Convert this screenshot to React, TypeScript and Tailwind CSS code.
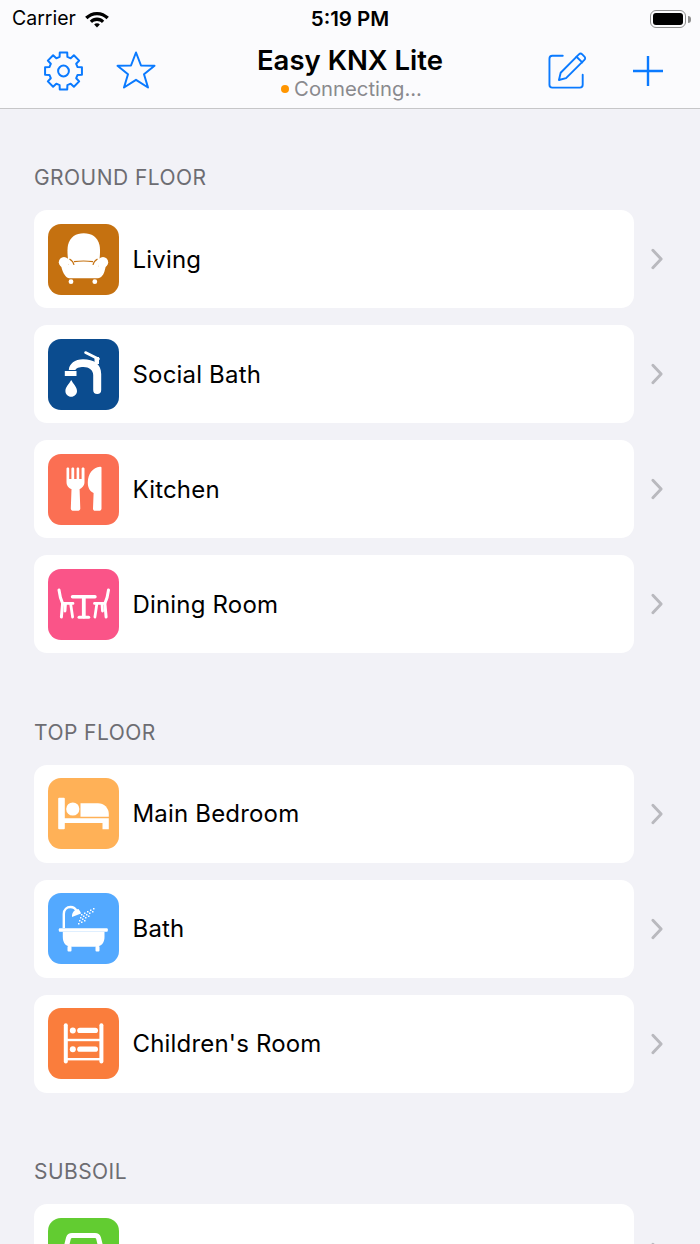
// App.tsx
const font = { fontFamily: 'Inter, "Noto Sans", sans-serif' };

// 8 tooth gear outline, centred on 20,20
function gearPath() {
  const pts: string[] = [];
  for (let i = 0; i < 8; i++) {
    const a = (i * Math.PI) / 4 - Math.PI / 2;
    const at = (r: number, d: number) =>
      `${(20 + r * Math.cos(a + d)).toFixed(2)} ${(20 + r * Math.sin(a + d)).toFixed(2)}`;
    pts.push(at(14.6, -0.27), at(18.8, -0.2), at(18.8, 0.2), at(14.6, 0.27));
  }
  return `M${pts.join(' L')} Z`;
}

function Armchair() {
  return (
    <svg viewBox="0 0 71 71" className="h-full w-full" fill="white">
      <path d="M21 44 C19.5 32 19 26 20 21 C22 13 28 9.3 35.7 9.3 C43.5 9.3 49.5 13 51.5 21 C52.5 26 52 32 50.5 44 Z" />
      <circle cx="16" cy="38.3" r="5.2" />
      <circle cx="55" cy="38.3" r="5.2" />
      <path d="M13 41 H21 V43 H50.5 V41 H58 C57 46 56 50 54 52 C53 53.8 51 54.3 48 54.3 H23 C20 54.3 18.5 53.8 17.5 52 C15 49 14 46 13 41 Z" />
      <circle cx="23" cy="57.7" r="2.4" />
      <circle cx="46.8" cy="57.7" r="2.4" />
      <path d="M21.5 35 C24 36.5 25.5 38 26 41 M49.5 35 C47 36.5 45.5 38 45 41 M26 37.6 C32 36.8 39 36.8 45 37.6" stroke="#c57110" strokeWidth="1.1" fill="none" />
    </svg>
  );
}

function Faucet() {
  return (
    <svg viewBox="0 0 71 71" className="h-full w-full" fill="white">
      <path d="M20.8 31 C21 25 27 20.3 35 20.3 C46 20.3 53.2 25 53.2 35 V51 A4 4 0 0 1 45.2 51 V36 C45.2 31 41 28 35.5 28 C31 28 28 29 27.5 31 Z" />
      <path d="M37.5 13.5 L50.5 20" fill="none" stroke="white" strokeWidth="2.6" strokeLinecap="round" />
      <rect x="46.5" y="18" width="4.5" height="7" />
      <rect x="16.8" y="32" width="11.7" height="5" />
      <path d="M23.2 41 C25 44.5 29 48 29 52 C29 55.2 26.4 57.8 23.2 57.8 C20 57.8 17.4 55.2 17.4 52 C17.4 48 21.4 44.5 23.2 41 Z" />
    </svg>
  );
}

function Cutlery() {
  return (
    <svg viewBox="0 0 71 71" className="h-full w-full" fill="white">
      <path d="M18.5 14.5 C18.5 13 21.2 13 21.2 14.5 V25 H23.4 V14.5 C23.4 13 26.2 13 26.2 14.5 V25 H28.6 V14.5 C28.6 13 31.2 13 31.2 14.5 V25 H33.6 V14.5 C33.6 13 36.5 13 36.5 14.5 V28 C36.5 32 33.5 34.5 31.6 35 L32.3 54.5 C32.3 56.2 31 56.8 29.5 56.8 H25.6 C24 56.8 22.8 56.2 22.8 54.5 L23.5 35 C21 34.3 18.5 32 18.5 28 Z" />
      <path d="M53.5 13.5 V54.5 C53.5 56.2 52.4 56.8 51 56.8 H47.4 C45.8 56.8 45 56 45 54.5 L45.6 39 C42 37.5 39.8 34 39.8 28.5 C39.8 20 45 13.2 52 12.8 C53 12.7 53.5 13 53.5 13.5 Z" />
    </svg>
  );
}

function Dining() {
  return (
    <svg viewBox="0 0 71 71" className="h-full w-full" fill="none" stroke="white" strokeLinecap="round">
      <path d="M24.5 27.8 H47" strokeWidth="3.4" />
      <path d="M35.8 28 V47.5" strokeWidth="3.8" />
      <path d="M31 48.3 H40.7" strokeWidth="3" />
      <path d="M11 21 C11.6 26 13 31 14.6 34.4 L13.4 48" strokeWidth="3" />
      <path d="M14.6 34.4 H25 M22.6 34.4 L24.6 48 M17.5 35 L17 42" strokeWidth="2.8" />
      <path d="M60.5 21 C59.9 26 58.5 31 56.9 34.4 L58.1 48" strokeWidth="3" />
      <path d="M56.9 34.4 H46.5 M48.9 34.4 L46.9 48 M54 35 L54.5 42" strokeWidth="2.8" />
    </svg>
  );
}

function Bed() {
  return (
    <svg viewBox="0 0 71 71" className="h-full w-full" fill="white">
      <rect x="10.2" y="19.7" width="6.6" height="31.6" rx="1" />
      <circle cx="24.8" cy="31" r="6.6" />
      <path d="M32.5 25.3 H50 C56 25.3 60.8 30 60.8 36 V38.7 H32.5 Z" />
      <path d="M16 40.3 H60.8 V51.3 H54.5 V44.9 H16 Z" />
    </svg>
  );
}

function Bathtub() {
  const drops = [
    [33, 21], [36, 19.5], [39, 18], [42, 16.5], [45, 15],
    [32, 24], [35, 22.5], [38, 21], [41, 19.5], [44, 18],
    [31, 27], [34, 25.5], [37, 24], [40, 22.5],
    [30, 30], [33, 28.5], [36, 27],
  ];
  return (
    <svg viewBox="0 0 71 71" className="h-full w-full" fill="white">
      <path d="M15.8 35 V21 C15.8 16.5 19 14 22.5 14 C25.5 14 27.5 15.5 28.5 18" fill="none" stroke="white" strokeWidth="2.4" />
      <path d="M24 24 C23.5 19 27 16.5 30.5 16 C32 18 33 19.5 33 20.5 Z" />
      {drops.map(([x, y], i) => (
        <rect key={i} x={x} y={y} width="1.5" height="1.5" />
      ))}
      <rect x="10.8" y="35.3" width="49" height="3.4" rx="1" />
      <path d="M14.8 38.7 H56.5 V44 C56.5 50 53 53.8 47.5 53.8 H23.5 C18 53.8 14.8 50 14.8 44 Z" />
      <rect x="19.5" y="53" width="4" height="5.5" rx="1" />
      <rect x="47.5" y="53" width="4" height="5.5" rx="1" />
    </svg>
  );
}

function Bunk() {
  return (
    <svg viewBox="0 0 71 71" className="h-full w-full" fill="white">
      <rect x="15.8" y="15.2" width="4" height="40.2" rx="2" />
      <rect x="51.4" y="15.2" width="4" height="40.2" rx="2" />
      <rect x="18" y="30.8" width="35" height="2.4" />
      <rect x="18" y="50" width="35" height="2.4" />
      <circle cx="24.8" cy="22.4" r="3" />
      <rect x="29.2" y="19.8" width="20.8" height="5.2" rx="2.6" />
      <circle cx="24.8" cy="41.2" r="3" />
      <rect x="29.2" y="38.6" width="20.8" height="5.2" rx="2.6" />
    </svg>
  );
}

function Garage() {
  return (
    <svg viewBox="0 0 71 71" className="h-full w-full" fill="none" stroke="white" strokeWidth="5">
      <path d="M24 17.5 H47 C49 17.5 50 18.5 50.5 20 L53 30 V50 H18 V30 L20.5 20 C21 18.5 22 17.5 24 17.5 Z" />
    </svg>
  );
}

function Row({ color, label, icon }: { color: string; label: string; icon: React.ReactNode }) {
  return (
    <div className="flex items-center">
      <div className="flex h-[98px] w-[600px] items-center rounded-[13px] bg-white pl-[13.5px]">
        <div className={`h-[71px] w-[71px] shrink-0 overflow-hidden rounded-[13px] ${color}`}>{icon}</div>
        <span className="ml-[14px] pt-[1px] text-[24px] leading-[32px] tracking-[0.18px] text-black">{label}</span>
      </div>
      <svg viewBox="0 0 14 24" className="ml-[16px] h-[22px] w-[14px]" fill="none" stroke="#b9b9be" strokeWidth="3.2" strokeLinecap="round" strokeLinejoin="round">
        <path d="M2.5 2.5 L11.5 12 L2.5 21.5" />
      </svg>
    </div>
  );
}

function Section({ title, className, children }: { title: string; className: string; children: React.ReactNode }) {
  return (
    <section className={className}>
      <h2 className="mb-[19px] h-[28px] pt-[1px] text-[21px] leading-[28px] tracking-[0.45px] text-[#6d6d72]">{title}</h2>
      <div className="flex flex-col gap-[17px]">{children}</div>
    </section>
  );
}

export default function App() {
  return (
    <div className="h-[1244px] w-[700px] overflow-hidden bg-[#f2f2f7]" style={font}>
      <header className="h-[109px] border-b border-[#c6c6c8] bg-[#fbfbfd]">
        {/* status bar */}
        <div className="relative flex h-[37px] items-center pl-3 pr-[9px] pt-[1px] text-[19.5px] text-black">
          <span>Carrier</span>
          <svg viewBox="0 0 26 20" className="ml-[8px] h-[19px] w-[26px]" fill="black">
            <path d="M13 2 C8 2 4 4 .5 7.2 L3 9.8 C5.8 7.2 9 5.6 13 5.6 C17 5.6 20.2 7.2 23 9.8 L25.5 7.2 C22 4 18 2 13 2 Z" />
            <path d="M13 8 C10 8 7.6 9.2 5.4 11.2 L7.8 13.6 C9.2 12.4 11 11.6 13 11.6 C15 11.6 16.8 12.4 18.2 13.6 L20.6 11.2 C18.4 9.2 16 8 13 8 Z" />
            <path d="M13 14 C11.8 14 10.8 14.4 10 15.2 L13 18.4 L16 15.2 C15.2 14.4 14.2 14 13 14 Z" />
          </svg>
          <span className="absolute left-0 right-0 text-center text-[20.5px] font-semibold">5:19 PM</span>
          <div className="ml-auto flex items-center">
            <div className="h-[18px] w-[36px] rounded-[6px] border-[1.5px] border-[#8e8e8e] p-[2px]">
              <div className="h-full w-full rounded-[3px] bg-black" />
            </div>
            <div className="ml-[2px] h-[7px] w-[3px] rounded-r bg-[#8e8e8e]" />
          </div>
        </div>
        {/* nav bar */}
        <div className="relative flex h-[71px] items-start">
          <div className="absolute left-0 right-0 top-[6px] flex flex-col items-center">
            <div className="text-[27.5px] font-semibold leading-[34px] text-black">Easy KNX Lite</div>
            <div className="flex items-center pl-[3px] text-[20.3px] leading-[24px] text-[#8a8a8e]">
              <span className="mr-[5px] h-[8px] w-[8px] rounded-full bg-[#ff9500]" />
              Connecting...
            </div>
          </div>
          <svg viewBox="0 0 40 40" className="ml-[43px] mt-[14px] h-[40px] w-[41px]" fill="none" stroke="#0a7aff" strokeWidth="2" strokeLinejoin="round">
            <path d={gearPath()} />
            <circle cx="20" cy="20" r="5.4" />
          </svg>
          <svg viewBox="0 0 40 38" className="ml-[32px] mt-[14px] h-[38px] w-[40px]" fill="none" stroke="#0a7aff" strokeWidth="2" strokeLinejoin="round">
            <path d="M20 1.5 L25 14.5 L38.5 14.8 L28 23.2 L32 36.5 L20 28.8 L8 36.5 L12 23.2 L1.5 14.8 L15 14.5 Z" />
          </svg>
          <svg viewBox="0 0 40 40" className="absolute left-[548px] top-[15px] h-[38px] w-[39px]" fill="none" stroke="#0a7aff" strokeWidth="2" strokeLinejoin="round" strokeLinecap="round">
            <path d="M15 4 H4 C2 4 1 5 1 7 V34.5 C1 36.5 2 37.5 4 37.5 H33 C35 37.5 36 36.5 36 34.5 V24" />
            <path d="M32 2.5 C33 1.5 34.5 1.5 35.5 2.5 L37.8 4.8 C38.8 5.8 38.8 7.3 37.8 8.3 L18.5 27.5 L11 29.5 L12.8 21.8 Z" />
            <path d="M29.5 5 L35.5 11" />
          </svg>
          <svg viewBox="0 0 30 30" className="absolute left-[633px] top-[19px] h-[30px] w-[30px]" fill="none" stroke="#0a7aff" strokeWidth="2.4">
            <path d="M15 0 V30 M0 15 H30" />
          </svg>
        </div>
      </header>

      <main className="pl-[34px]">
        <Section title="GROUND FLOOR" className="pt-[54px]">
          <Row color="bg-[#c57110]" label="Living" icon={<Armchair />} />
          <Row color="bg-[#0b4c8f]" label="Social Bath" icon={<Faucet />} />
          <Row color="bg-[#fb6f53]" label="Kitchen" icon={<Cutlery />} />
          <Row color="bg-[#fa5488]" label="Dining Room" icon={<Dining />} />
        </Section>
        <Section title="TOP FLOOR" className="pt-[64.5px]">
          <Row color="bg-[#ffb157]" label="Main Bedroom" icon={<Bed />} />
          <Row color="bg-[#53a9ff]" label="Bath" icon={<Bathtub />} />
          <Row color="bg-[#fa7d3c]" label="Children's Room" icon={<Bunk />} />
        </Section>
        <Section title="SUBSOIL" className="pt-[64.5px]">
          <Row color="bg-[#62cc31]" label="Garage" icon={<Garage />} />
        </Section>
      </main>
    </div>
  );
}
